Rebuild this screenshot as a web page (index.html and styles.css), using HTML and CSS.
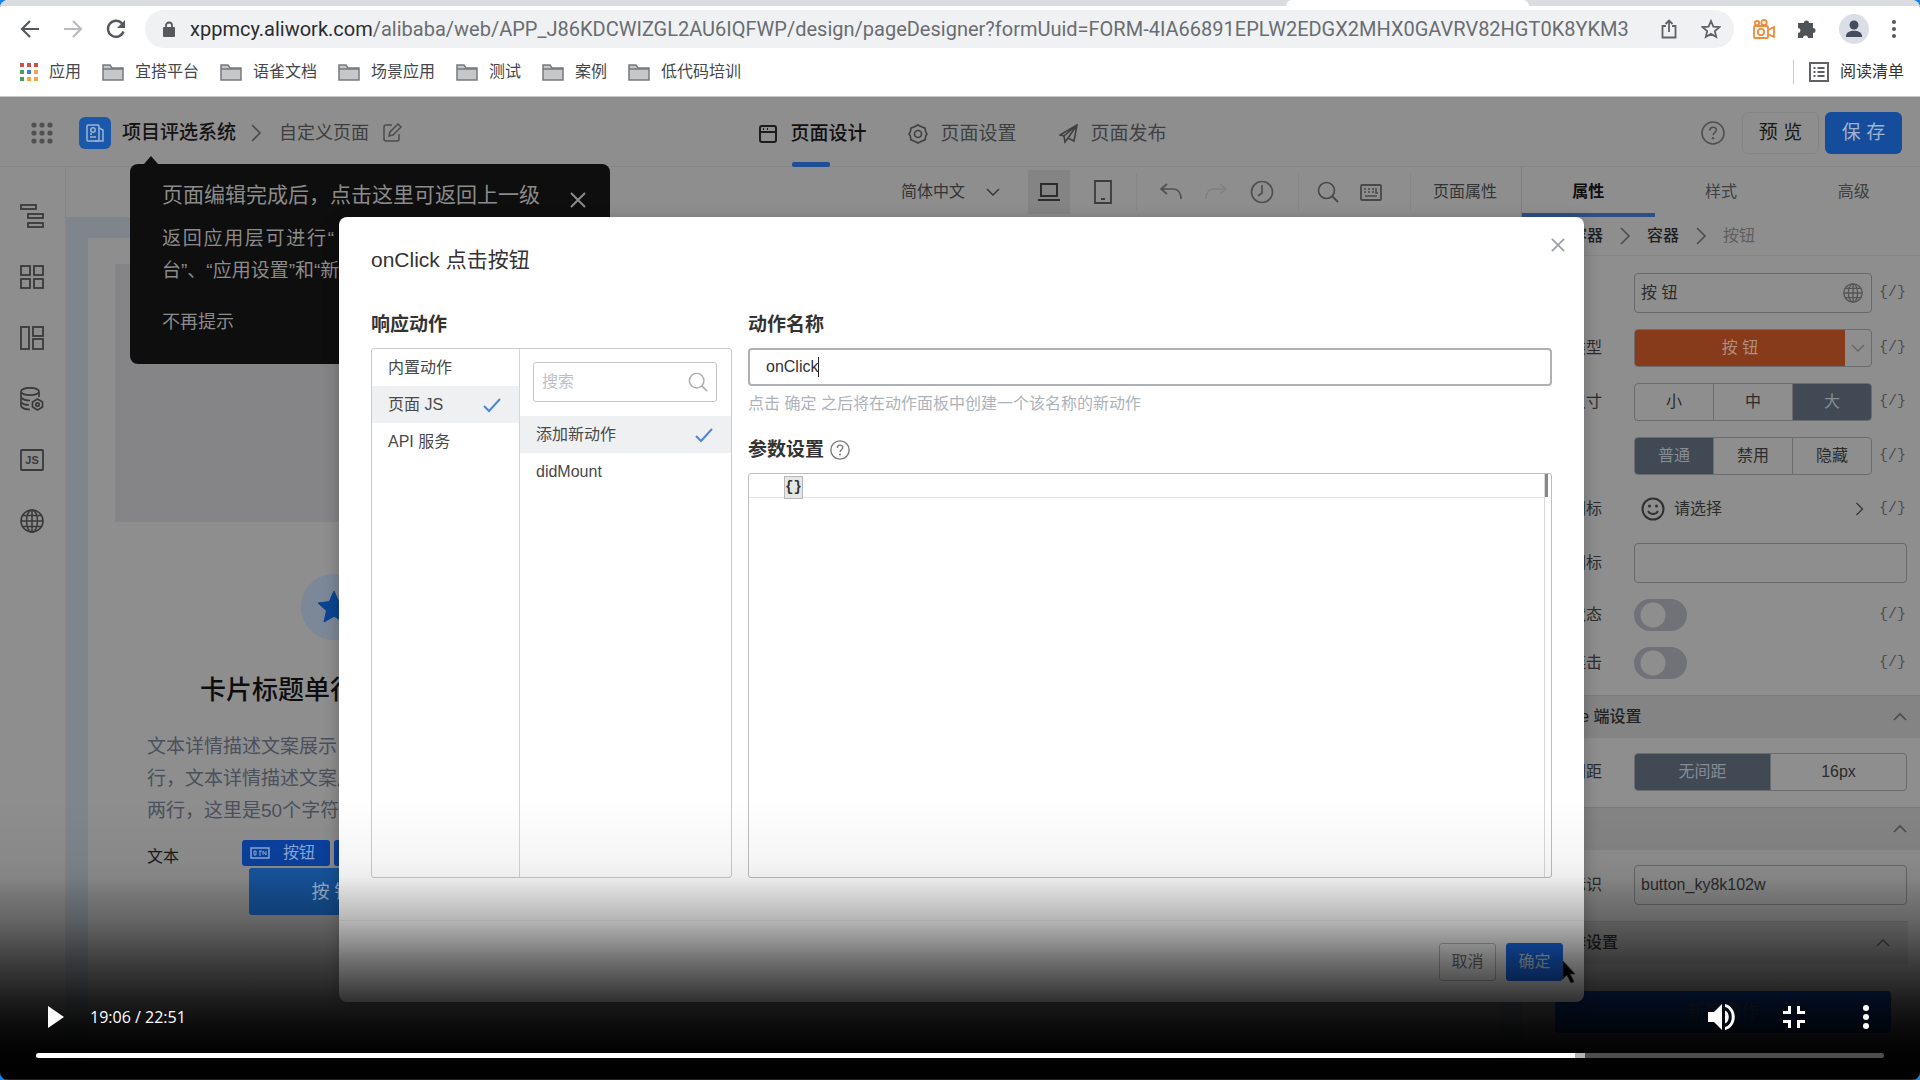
FILE: index.html
```html
<!DOCTYPE html>
<html lang="zh-CN">
<head>
<meta charset="utf-8">
<title>页面设计</title>
<link rel="stylesheet" href="styles.css">
</head>
<body>
<svg class="defs" aria-hidden="true">
  <symbol id="folder" viewBox="0 0 22 18"><path d="M1 16V2h7l2 3h11v12H1z" fill="#c6c7c9" stroke="#77797c" stroke-width="1.5"/><path d="M1 6h20" stroke="#77797c" stroke-width="1.5"/></symbol>
  <symbol id="right" viewBox="0 0 12 18"><path d="M2 1l8 8-8 8" fill="none" stroke="currentColor" stroke-width="1.6"/></symbol>
  <symbol id="up" viewBox="0 0 14 10"><path d="M1 8l6-6 6 6" fill="none" stroke="currentColor" stroke-width="1.6"/></symbol>
  <symbol id="down" viewBox="0 0 14 10"><path d="M1 2l6 6 6-6" fill="none" stroke="currentColor" stroke-width="1.4"/></symbol>
  <symbol id="close" viewBox="0 0 16 16"><path d="M1 1l14 14M15 1L1 15" fill="none" stroke="currentColor" stroke-width="2"/></symbol>
  <symbol id="search" viewBox="0 0 22 22"><circle cx="9.500" cy="9.500" r="8" fill="none" stroke="currentColor" stroke-width="1.6"/><path d="M15 15l6 6" stroke="currentColor" stroke-width="1.8"/></symbol>
  <symbol id="help" viewBox="0 0 24 24"><circle cx="12" cy="12" r="11" fill="none" stroke="currentColor" stroke-width="1.6"/><path d="M8.800 9.500c0-4.400 6.600-4.200 6.600-.4 0 2.400-3.300 2.600-3.300 5.200" fill="none" stroke="currentColor" stroke-width="1.6"/><circle cx="12" cy="17.300" r="1.200" fill="currentColor"/></symbol>
  <symbol id="check" viewBox="0 0 18 16"><path d="M1 9l5 5L17 2" fill="none" stroke="#4a86e0" stroke-width="2"/></symbol>
  <symbol id="globe" viewBox="0 0 24 24"><g fill="none" stroke="currentColor" stroke-width="1.600"><circle cx="12" cy="12" r="11"/><ellipse cx="12" cy="12" rx="5.500" ry="11"/><path d="M12 1v22M1 12h22M3 6.500h18M3 17.500h18"/></g></symbol>
</svg>

<div class="player">
  <header class="browser">
    <div class="tabstrip"><span class="tab"></span></div>
    <div class="navbar">
      <div class="nav-btns">
        <button aria-label="后退"><svg class="i20" viewBox="0 0 20 20"><path d="M19 10H2M10 2l-8 8 8 8" fill="none" stroke="#55585c" stroke-width="2.200"/></svg></button>
        <button aria-label="前进"><svg class="i20" viewBox="0 0 20 20"><path d="M1 10h17M10 2l8 8-8 8" fill="none" stroke="#b9bbbe" stroke-width="2.200"/></svg></button>
        <button aria-label="刷新"><svg class="i20" viewBox="0 0 20 20"><path d="M17.500 12.500A8 8 0 1 1 16 4.500" fill="none" stroke="#55585c" stroke-width="2.400"/><path d="M19 1v8h-8z" fill="#55585c"/></svg></button>
      </div>
      <div class="address">
        <svg class="lock" viewBox="0 0 12 16"><rect y="6" width="12" height="10" rx="1" fill="#55585c"/><path d="M3 7V4.500a3 3 0 0 1 6 0V7" fill="none" stroke="#55585c" stroke-width="1.800"/></svg>
        <span class="url"><b>xppmcy.aliwork.com</b>/alibaba/web/APP_J86KDCWIZGL2AU6IQFWP/design/pageDesigner?formUuid=FORM-4IA66891EPLW2EDGX2MHX0GAVRV82HGT0K8YKM3</span>
        <button aria-label="分享"><svg class="share" viewBox="0 0 16 20"><path d="M5 7H1.500v11.500h13V7H11M8 13V2M4.500 5L8 1.500 11.500 5" fill="none" stroke="#5f6368" stroke-width="1.800"/></svg></button>
        <button aria-label="收藏"><svg class="i20" viewBox="0 0 20 20"><path d="M10 2l2.400 5.600 6 .5-4.600 4 1.400 5.900L10 14.900 4.800 18l1.400-5.900-4.600-4 6-.5z" fill="none" stroke="#5f6368" stroke-width="1.800"/></svg></button>
      </div>
      <div class="extensions">
        <svg class="i22" viewBox="0 0 22 20"><g fill="none" stroke="#f08a3c" stroke-width="1.800"><rect x="1" y="7" width="14" height="12" rx="1"/><circle cx="8" cy="13" r="3.200"/><path d="M15 11l6-3v10l-6-3"/><circle cx="4" cy="4" r="2.200"/><circle cx="11" cy="3.500" r="2.700"/></g></svg>
        <svg class="i20" viewBox="0 0 20 20"><path d="M7 4a2.500 2.500 0 0 1 5 0h4v5a2.500 2.500 0 1 1 0 5v5h-5a2.500 2.500 0 0 0-5 0H1v-5a2.500 2.500 0 0 0 0-5V4z" fill="#505358"/></svg>
        <svg class="avatar" viewBox="0 0 30 30"><circle cx="15" cy="15" r="15" fill="#dcdee6"/><circle cx="15" cy="11" r="4.500" fill="#454c60"/><path d="M7 22c0-7 16-7 16 0v1H7z" fill="#454c60"/></svg>
        <svg class="dots" viewBox="0 0 6 20"><g fill="#55585c"><circle cx="3" cy="3" r="2"/><circle cx="3" cy="10" r="2"/><circle cx="3" cy="17" r="2"/></g></svg>
      </div>
    </div>
    <nav class="bookmarks">
      <a href="#"><svg class="apps" viewBox="0 0 18 18"><g fill="#d0504a"><path d="M0 0h4v4H0zM7 0h4v4H7zM14 0h4v4h-4z"/></g><path d="M0 7h4v4H0zM0 14h4v4H0z" fill="#46a05a"/><path d="M7 7h4v4H7z" fill="#3c7fe0"/><path d="M14 7h4v4h-4zM7 14h4v4H7zM14 14h4v4h-4z" fill="#eda93c"/></svg>应用</a>
      <a href="#"><svg class="folder"><use href="#folder"/></svg>宜搭平台</a>
      <a href="#"><svg class="folder"><use href="#folder"/></svg>语雀文档</a>
      <a href="#"><svg class="folder"><use href="#folder"/></svg>场景应用</a>
      <a href="#"><svg class="folder"><use href="#folder"/></svg>测试</a>
      <a href="#"><svg class="folder"><use href="#folder"/></svg>案例</a>
      <a href="#"><svg class="folder"><use href="#folder"/></svg>低代码培训</a>
      <a href="#" class="reading"><svg class="i20" viewBox="0 0 20 20"><rect x="1" y="1" width="18" height="18" fill="none" stroke="#5f6368" stroke-width="2"/><path d="M4.500 6h2M4.500 10h2M4.500 14h2M8.500 6h7M8.500 10h7M8.500 14h7" stroke="#5f6368" stroke-width="2"/></svg>阅读清单</a>
    </nav>
  </header>

  <div class="app">
    <header class="app-head">
      <div class="crumbs">
        <svg class="grid9" viewBox="0 0 22 22"><g fill="#515151"><circle cx="3" cy="3" r="2.600"/><circle cx="11" cy="3" r="2.600"/><circle cx="19" cy="3" r="2.600"/><circle cx="3" cy="11" r="2.600"/><circle cx="11" cy="11" r="2.600"/><circle cx="19" cy="11" r="2.600"/><circle cx="3" cy="19" r="2.600"/><circle cx="11" cy="19" r="2.600"/><circle cx="19" cy="19" r="2.600"/></g></svg>
        <svg class="logo" viewBox="0 0 32 32"><rect width="32" height="32" rx="6" fill="#1a58ab"/><g fill="none" stroke="#9fb4d0" stroke-width="1.500"><rect x="8" y="8" width="12" height="16" rx="1"/><path d="M20 11l4 2v11h-8M11 20h6M11 17h2"/><circle cx="14" cy="13" r="2.200"/></g></svg>
        <strong>项目评选系统</strong>
        <svg class="chev"><use href="#right"/></svg>
        <span class="page-name">自定义页面</span>
        <svg class="edit" viewBox="0 0 20 20"><path d="M10 2H4a2 2 0 0 0-2 2v12a2 2 0 0 0 2 2h11a2 2 0 0 0 2-2v-5M7 13l1-4 8-8 3 3-8 8z" fill="none" stroke="#4c4c4c" stroke-width="1.500"/></svg>
      </div>
      <nav class="views">
        <a href="#" class="on"><svg class="i20" viewBox="0 0 20 20"><g fill="none" stroke="#1c1c1c" stroke-width="2"><rect x="2" y="2" width="16" height="16" rx="2"/><path d="M2 8h16M5 5h1M9 5h1"/></g></svg>页面设计</a>
        <a href="#"><svg class="i20" viewBox="0 0 20 20"><g fill="none" stroke="#404040" stroke-width="1.600"><path d="M10 1l3.500 1.800 3.600 1.400.6 3.800L19 10l-1.300 2-.6 3.800-3.600 1.400L10 19l-3.500-1.800-3.600-1.400-.6-3.800L1 10l1.300-2 .6-3.800 3.600-1.400z"/><circle cx="10" cy="10" r="3.500"/></g></svg>页面设置</a>
        <a href="#"><svg class="i20" viewBox="0 0 20 20"><path d="M1 11L18 1l-3 16-6-3-3 4-1-6zM5 12L18 1 9 14" fill="none" stroke="#404040" stroke-width="1.600"/></svg>页面发布</a>
      </nav>
      <div class="head-actions">
        <svg class="help"><use href="#help"/></svg>
        <button class="btn-preview">预 览</button>
        <button class="btn-save">保 存</button>
      </div>
    </header>

    <div class="workspace">
      <aside class="rail">
        <svg viewBox="0 0 24 24"><g fill="none" stroke="#3a3a3a" stroke-width="1.800"><rect x="1" y="1" width="15" height="4"/><rect x="8" y="10" width="15" height="4"/><rect x="8" y="19" width="15" height="4"/></g></svg>
        <svg viewBox="0 0 24 24"><g fill="none" stroke="#3a3a3a" stroke-width="1.800"><rect x="1" y="1" width="9" height="9"/><rect x="14" y="1" width="9" height="9"/><rect x="1" y="14" width="9" height="9"/><rect x="14" y="14" width="9" height="9"/></g></svg>
        <svg viewBox="0 0 24 24"><g fill="none" stroke="#3a3a3a" stroke-width="1.800"><rect x="1" y="1" width="8" height="22"/><rect x="13" y="1" width="10" height="9"/><rect x="13" y="13" width="10" height="10"/></g></svg>
        <svg viewBox="0 0 24 24"><g fill="none" stroke="#3a3a3a" stroke-width="1.700"><ellipse cx="10" cy="4.500" rx="9" ry="3.700"/><path d="M1 5v14c1 2 5 3.500 9 3.500M19 5v5M1 10c1 2 5 3.500 9 3.500M1 15c1 2 5 3 8 3"/><path d="M17.500 12l5 3v5l-5 3-5-3v-5z"/><circle cx="17.500" cy="17.500" r="1.700"/></g></svg>
        <svg viewBox="0 0 24 24"><rect x="1" y="2" width="22" height="20" rx="1" fill="none" stroke="#3a3a3a" stroke-width="1.800"/><text x="12" y="16" text-anchor="middle" font-size="11" font-weight="700" fill="#3a3a3a">JS</text></svg>
        <svg class="dark"><use href="#globe"/></svg>
      </aside>

      <main class="stage">
        <div class="tools">
          <button class="lang">简体中文<svg class="v14"><use href="#down"/></svg></button>
          <button class="dev on" aria-label="电脑"><svg class="i22" viewBox="0 0 22 20"><path d="M3 2h16v12H3zM0 18h22" fill="none" stroke="#2c2c2c" stroke-width="2"/></svg></button>
          <button class="dev" aria-label="手机"><svg class="i24" viewBox="0 0 24 24"><path d="M4 1h16v22H4zM10 19h4" fill="none" stroke="#3c3c3c" stroke-width="1.800"/></svg></button>
          <span class="bar"></span>
          <button class="tool" aria-label="撤销"><svg class="i22" viewBox="0 0 22 18"><path d="M7 1L1 6l6 5M1 6h12c5 0 8 4 8 10" fill="none" stroke="#505050" stroke-width="1.700"/></svg></button>
          <button class="tool" aria-label="重做"><svg class="i22" viewBox="0 0 22 18"><path d="M15 1l6 5-6 5M21 6H9c-5 0-8 4-8 10" fill="none" stroke="#808080" stroke-width="1.500"/></svg></button>
          <button class="tool" aria-label="历史"><svg class="i24" viewBox="0 0 24 24"><circle cx="12" cy="12" r="10.500" fill="none" stroke="#505050" stroke-width="1.700"/><path d="M12 5v8l-4 3" fill="none" stroke="#505050" stroke-width="1.700"/></svg></button>
          <span class="bar"></span>
          <button class="tool near" aria-label="搜索"><svg class="i22"><use href="#search"/></svg></button>
          <button class="tool near" aria-label="快捷键"><svg class="i22" viewBox="0 0 22 18"><rect x="1" y="2" width="20" height="15" rx="1" fill="none" stroke="#484848" stroke-width="1.800"/><path d="M4 6h2M8 6h2M12 6h2M4 9h2M8 9h2M12 9h2M16 5v5h2M5 13h12" stroke="#484848" stroke-width="1.500" fill="none"/></svg></button>
          <span class="bar"></span>
          <button class="page-attr">页面属性</button>
        </div>
        <div class="canvas">
          <div class="sheet">
            <div class="hero"></div>
            <section class="card">
              <svg class="star" viewBox="0 0 66 66"><circle cx="33" cy="33" r="33" fill="#7c8797"/><path d="M33 17l4.700 10.600L49 29l-8.500 7.800L43 48l-10-5.700L23 48l2.500-11.200L17 29l11.300-1.400z" fill="#0b4491" stroke="#0b4491" stroke-linejoin="round"/></svg>
              <h2>卡片标题单行展示标题</h2>
              <p>文本详情描述文案展示，展示两<br>行，文本详情描述文案展示展示<br>两行，这里是50个字符展示文案</p>
              <div class="field">
                <span class="field-name">文本</span>
                <div class="picked">
                  <div class="tags"><span class="tag"><svg class="btn-ico" viewBox="0 0 20 12"><rect x="1" y="1" width="18" height="10" fill="none" stroke="#8ba9dc" stroke-width="1.500"/><path d="M4 4v4h2V4zM9 4h3M10 4v5M13 8V4l3 4V4" stroke="#8ba9dc" fill="none"/></svg>按钮</span><span class="tag wide"></span></div>
                  <button class="big">按 钮</button>
                </div>
              </div>
            </section>
          </div>
        </div>
      </main>

      <aside class="panel">
        <nav class="ptabs"><a href="#" class="on">属性</a><a href="#">样式</a><a href="#">高级</a></nav>
        <div class="path"><b>子容器</b><svg class="chev"><use href="#right"/></svg><b>容器</b><svg class="chev"><use href="#right"/></svg><span>按钮</span></div>
        <div class="rows">
          <div class="row tall"><label for="f-title">标题</label><div class="ctl box"><input id="f-title" value="按 钮"><svg class="i20"><use href="#globe"/></svg></div><span class="code">{/}</span></div>
          <div class="row"><span class="lbl">按钮类型</span><button class="ctl type"><span>按 钮</span><svg class="v14"><use href="#down"/></svg></button><span class="code">{/}</span></div>
          <div class="row"><span class="lbl">按钮尺寸</span><div class="ctl seg"><button>小</button><button>中</button><button class="on">大</button></div><span class="code">{/}</span></div>
          <div class="row"><span class="lbl">状态</span><div class="ctl seg"><button class="on">普通</button><button>禁用</button><button>隐藏</button></div><span class="code">{/}</span></div>
          <div class="row low"><span class="lbl">按钮图标</span><button class="ctl pick"><svg class="i24" viewBox="0 0 24 24"><circle cx="12" cy="12" r="10.500" fill="none" stroke="#303030" stroke-width="2"/><circle cx="8.500" cy="9" r="1.500" fill="#303030"/><circle cx="15.500" cy="9" r="1.500" fill="#303030"/><path d="M7 14c2 4 8 4 10 0" fill="none" stroke="#303030" stroke-width="1.800"/></svg>请选择<svg class="go"><use href="#right"/></svg></button><span class="code">{/}</span></div>
          <div class="row tall"><label for="f-icon">自选图标</label><div class="ctl box"><input id="f-icon"></div></div>
          <div class="row short"><label for="f-load">加载状态</label><input class="switch" type="checkbox" id="f-load"><span class="code">{/}</span></div>
          <div class="row short"><label for="f-dbl">防止连击</label><input class="switch" type="checkbox" id="f-dbl"><span class="code">{/}</span></div>
        </div>
        <h3>Mobile 端设置<svg class="v14"><use href="#up"/></svg></h3>
        <div class="rows one"><div class="row"><span class="lbl">组件间距</span><div class="ctl seg"><button class="on">无间距</button><button>16px</button></div></div></div>
        <h3>高级<svg class="v14"><use href="#up"/></svg></h3>
        <div class="rows one"><div class="row tall"><label for="f-id">唯一标识</label><div class="ctl box"><input id="f-id" value="button_ky8k102w"></div></div></div>
        <h3 class="inset">动作设置<svg class="v14"><use href="#up"/></svg></h3>
        <button class="new-action">新建动作</button>
      </aside>
    </div>

    <div class="tip">
      <button class="tip-close" aria-label="关闭提示"><svg class="i16"><use href="#close"/></svg></button>
      <h4>页面编辑完成后，点击这里可返回上一级</h4>
      <p><span class="full">返回应用层可进行“</span><span>台”、“应用设置”和“新</span></p>
      <a href="#">不再提示</a>
    </div>

    <div class="overlay">
      <div class="modal" role="dialog" aria-labelledby="m-title">
        <header><h1 id="m-title">onClick 点击按钮</h1><button class="m-close" aria-label="关闭"><svg><use href="#close"/></svg></button></header>
        <div class="m-body">
          <section class="m-left">
            <h5>响应动作</h5>
            <div class="lists">
              <ul class="kinds"><li>内置动作</li><li class="on">页面 JS<svg class="chk"><use href="#check"/></svg></li><li>API 服务</li></ul>
              <div class="acts">
                <div class="m-search"><input aria-label="搜索" placeholder="搜索"><svg class="i20"><use href="#search"/></svg></div>
                <ul><li class="on">添加新动作<svg class="chk"><use href="#check"/></svg></li><li>didMount</li></ul>
              </div>
            </div>
          </section>
          <section class="m-right">
            <h5><label for="m-name">动作名称</label></h5>
            <div class="m-input"><input id="m-name" value="onClick"><i class="caret"></i></div>
            <p class="hint">点击 确定 之后将在动作面板中创建一个该名称的新动作</p>
            <h5 class="param">参数设置<svg class="i20"><use href="#help"/></svg></h5>
            <div class="editor"><div class="code-area"><div class="line"><span>{}</span></div></div><div class="ruler"><i></i></div></div>
          </section>
        </div>
        <footer><button>取消</button><button class="ok">确定</button></footer>
      </div>
    </div>
    <svg class="cursor" viewBox="0 0 14 24"><path d="M1 1v18l4-4 4 8 3-1.500-4-7.500h5z" fill="#000" stroke="#555" stroke-width=".8"/></svg>
  </div>

  <div class="controls">
    <div class="c-row">
      <button class="play" aria-label="播放"><svg viewBox="0 0 16 22"><path d="M0 0l16 11L0 22z" fill="#fff"/></svg></button>
      <span class="time">19:06 / 22:51</span>
      <button aria-label="音量"><svg class="vol" viewBox="0 0 28 28"><path d="M0 9v10h6l8 8V1L6 9zM17 7.500v13c5-2 5-11 0-13zM17 1v3c9 2 9 18 0 20v3c13-3 13-23 0-26z" fill="#fff"/></svg></button>
      <button aria-label="退出全屏"><svg class="i22" viewBox="0 0 22 22"><path d="M0 6.500h6.500V0M15.500 0v6.500H22M0 15.500h6.500V22M15.500 22v-6.500H22" fill="none" stroke="#fff" stroke-width="3"/></svg></button>
      <button aria-label="更多"><svg class="more" viewBox="0 0 6 24"><g fill="#fff"><circle cx="3" cy="3" r="3"/><circle cx="3" cy="12" r="3"/><circle cx="3" cy="21" r="3"/></g></svg></button>
    </div>
    <input class="seek" type="range" aria-label="进度" min="0" max="1371" value="1146" style="--played:83.3%;--loaded:83.8%">
  </div>
</div>
</body>
</html>
```
FILE: styles.css
```css
* { box-sizing: border-box; }
body {
  margin: 0;
  background: #0a84ff;
  font-family: "Liberation Sans", "Noto Sans CJK SC", sans-serif;
  font-size: 16px;
  line-height: 24px;
  color: #222;
}
button, input { font: inherit; color: inherit; margin: 0; padding: 0; border: 0; background: none; }
button { display: flex; align-items: center; justify-content: center; white-space: nowrap; }
input { min-width: 0; outline: 0; }
a { color: inherit; text-decoration: none; }
h1, h2, h3, h4, h5, p, ul { margin: 0; padding: 0; list-style: none; }
svg { display: block; flex: none; }
.defs { position: absolute; width: 0; height: 0; }
.i16 { width: 16px; height: 16px; }
.i20 { width: 20px; height: 20px; }
.i22 { width: 22px; height: 22px; }
.i24 { width: 24px; height: 24px; }
.v14 { width: 14px; height: 10px; }
.chev { width: 12px; height: 18px; color: #4c4c4c; }

.player {
  position: relative;
  display: flex;
  flex-direction: column;
  height: 100vh;
  overflow: hidden;
  border-radius: 8px;
  background: #000;
}

/* browser chrome */
.browser { background: #fff; border-bottom: 1px solid #c8c8c8; flex: none; }
.tabstrip { height: 6px; background: #dadce0; display: flex; }
.tab { width: 243px; margin-left: 67%; background: #fff; border-radius: 6px 6px 0 0; }
.navbar { display: flex; align-items: center; height: 46px; padding: 0 20px; gap: 19px; }
.nav-btns { display: flex; gap: 23px; }
.address {
  flex: 1;
  min-width: 0;
  display: flex;
  align-items: center;
  height: 38px;
  padding: 0 13px 0 18px;
  border-radius: 19px;
  background: #eff1f3;
}
.lock { width: 12px; height: 18px; }
.url { flex: 1; min-width: 0; overflow: hidden; white-space: nowrap; margin-left: 15px; font-family: Roboto, sans-serif; font-size: 20px; color: #6a6d71; }
.url b { font-weight: 400; color: #2b2d30; }
.share { width: 16px; height: 22px; }
.address button + button { margin-left: 24px; }
.extensions { display: flex; align-items: center; gap: 22px; padding-right: 3px; }
.avatar { width: 30px; height: 30px; }
.dots { width: 6px; height: 20px; }
.bookmarks { display: flex; align-items: center; height: 44px; padding: 0 16px 4px 20px; gap: 21px; color: #45474a; }
.bookmarks a { display: flex; align-items: center; gap: 11px; white-space: nowrap; }
.apps { width: 18px; height: 20px; }
.folder { width: 22px; height: 18px; }
.bookmarks a.reading { margin-left: auto; padding-left: 15px; border-left: 1px solid #ccc; color: #333; }

/* designer, seen through the modal mask */
.app { position: relative; flex: 1; min-height: 0; display: flex; flex-direction: column; background: #8e8e8e; }
.app-head { display: grid; grid-template-columns: 1fr auto 1fr; align-items: center; height: 70px; flex: none; border-bottom: 1px solid #868686; font-size: 19px; }
.crumbs { display: flex; align-items: center; padding: 2px 0 0 31px; white-space: nowrap; }
.grid9 { width: 22px; height: 22px; }
.logo { width: 32px; height: 32px; margin: 0 11px 0 26px; }
.crumbs strong { font-weight: 500; color: #141414; }
.crumbs .chev { margin: 0 17px 0 14px; }
.page-name { font-size: 18px; color: #3d3d3d; }
.edit { width: 20px; height: 20px; margin-left: 13px; }
.views { display: flex; gap: 42px; height: 70px; padding-left: 5px; color: #404040; }
.views a { position: relative; display: flex; align-items: center; gap: 12px; padding-top: 4px; }
.views a.on { font-weight: 500; color: #111; }
.views a.on::after { content: ""; position: absolute; left: 34px; bottom: 0; width: 38px; height: 5px; border-radius: 2px; background: #1f4d97; }
.head-actions { display: flex; align-items: center; justify-content: flex-end; padding: 2px 18px 0 0; }
.help { width: 24px; height: 24px; margin-right: 17px; color: #505050; }
.head-actions button { width: 77px; height: 42px; border-radius: 6px; }
.btn-preview { border: 1px solid #858585; margin-right: 6px; color: #1a1a1a; }
.head-actions .btn-save { background: #154c9b; color: #9fb3cf; }

.workspace { flex: 1; min-height: 0; display: flex; }
.rail { width: 66px; flex: none; display: flex; flex-direction: column; align-items: center; gap: 37px; padding: 37px 2px 0 0; border-right: 1px solid #868686; }
.rail svg { width: 24px; height: 24px; }
.rail .dark { color: #3a3a3a; }
.stage { flex: 1; min-width: 0; display: flex; flex-direction: column; }
.tools { display: flex; align-items: center; justify-content: flex-end; height: 50px; flex: none; color: #484848; }
.lang { gap: 21px; margin-right: 28px; color: #343434; }
.dev { width: 42px; height: 44px; }
.dev.on { background: #848484; margin-right: 12px; }
.bar { width: 1px; height: 36px; background: #868686; margin: 0 18px; }
.dev + .bar { margin: 0 23px 0 12px; }
.tool + .tool { margin-left: 23px; }
.tool + .tool.near { margin-left: 21px; }
.tool + .bar { margin-left: 24px; }
.tool.near + .bar { margin: 0 22px 0 28px; }
.page-attr { margin-right: 24px; color: #343434; }
.canvas { flex: 1; min-height: 0; overflow: hidden; background: #7f858a; padding: 21px 22px 0; }
.sheet { height: 100%; background: #8e8e8e; padding: 26px 27px 0; }
.hero { height: 258px; background: #858587; }
.card { width: 440px; padding: 52px 0 0 32px; }
.star { width: 66px; height: 66px; margin: 0 auto 0 154px; }
.card h2 { margin: 30px 0 0 53px; font-size: 26px; line-height: 40px; font-weight: 500; color: #0d0d0d; white-space: nowrap; }
.card p { margin-top: 21px; font-size: 19px; line-height: 32px; color: #4b505b; white-space: nowrap; }
.field { display: flex; margin-top: 13px; color: #1a1a1a; }
.field-name { width: 95px; padding-top: 5px; }
.picked { flex: 1; }
.tags { display: flex; gap: 4px; }
.tag { display: flex; align-items: center; gap: 13px; width: 88px; height: 26px; padding-left: 8px; border-radius: 3px; background: #0a419f; color: #8ba9dc; white-space: nowrap; }
.tag.wide { width: 60px; }
.btn-ico { width: 20px; height: 14px; }
.big { width: 166px; height: 47px; margin: 2px 0 0 7px; border-radius: 3px; background: #17559f; color: #a6bcd8; font-size: 18px; }

/* property panel */
.panel { width: 399px; flex: none; border-left: 1px solid #7c7c7c; overflow: hidden; color: #2c2c2c; }
.ptabs { display: flex; height: 50px; color: #404040; }
.ptabs a { flex: 1; display: flex; align-items: center; justify-content: center; }
.ptabs a.on { font-weight: 700; color: #0f0f0f; box-shadow: inset 0 -4px #2b4f86; }
.path { display: flex; align-items: center; gap: 16px; height: 39px; padding-left: 33px; border-bottom: 1px solid #848484; color: #5e5e5e; }
.path b { font-weight: 500; color: #1f1f1f; }
.rows { display: flex; flex-direction: column; gap: 16px; padding: 17px 13px 16px 16px; }
.rows.one { padding: 15px 13px 16px 16px; }
.row { display: flex; align-items: center; height: 38px; }
.row.tall { height: 40px; }
.row.low { height: 36px; }
.row.short { height: 32px; }
.row label, .row .lbl { width: 96px; flex: none; }
.ctl { flex: 1; min-width: 0; height: 100%; }
.code { width: 28px; flex: none; margin-left: 7px; color: #4c4c52; font-family: "Liberation Mono", monospace; font-size: 15px; white-space: nowrap; }
.box { display: flex; align-items: center; border: 1px solid #68686a; border-radius: 4px; padding: 0 8px 0 6px; }
.box input { flex: 1; }
.box svg { color: #555; }
.type { border: 1px solid #6c6c6c; border-radius: 4px; color: #666; }
.type span { flex: 1; height: 36px; line-height: 36px; background: #873b1b; color: #b08f80; border-radius: 3px 0 0 3px; }
.type svg { margin: 0 6px; }
.seg { display: flex; border: 1px solid #6c6c6e; border-radius: 4px; overflow: hidden; }
.seg button { flex: 1; }
.seg button + button { border-left: 1px solid #6c6c6e; }
.seg button.on { background: #414954; color: #858c96; }
.pick { justify-content: flex-start; gap: 9px; padding: 0 8px 0 7px; }
.go { width: 9px; height: 14px; margin-left: auto; color: #333; }
.switch { appearance: none; width: 53px; height: 32px; border-radius: 16px; background: radial-gradient(circle at 19px 16px, #8e8e8e 12px, #717277 13px); }
.switch + .code { margin-left: auto; }
.panel h3 { display: flex; align-items: center; justify-content: space-between; height: 43px; padding: 0 13px 0 20px; background: #848485; border-top: 1px solid #7c7c7c; font-size: 16px; font-weight: 500; color: #222; }
.panel h3 svg { color: #4c4c4c; }
.panel h3.inset { margin-right: 12px; padding: 0 18px 0 32px; }
.new-action { width: 336px; height: 42px; margin: 27px 0 0 33px; border-radius: 4px; background: #0c3d96; color: #3f4f6c; font-size: 18px; }

/* return hint */
.tip { position: absolute; left: 130px; top: 67px; width: 480px; height: 200px; padding: 17px 32px; border-radius: 8px; background: #0e0e0f; color: #8b8b8b; font-size: 18px; line-height: 32px; white-space: nowrap; }
.tip::before { content: ""; position: absolute; left: 14px; top: -8px; border: 7px solid transparent; border-top: 0; border-bottom: 8px solid #0e0e0f; }
.tip h4 { font-size: 21px; line-height: 28px; font-weight: 400; margin-bottom: 14px; }
.tip p { font-size: 19px; }
.tip p span { display: block; }
.tip p .full { width: 172px; text-align-last: justify; white-space: normal; }
.tip a { display: inline-block; margin-top: 19px; }
.tip-close { position: absolute; right: 24px; top: 28px; }

/* dialog */
.overlay { position: absolute; inset: 0; padding: 120px 336px 78px 339px; display: flex; }
.modal { flex: 1; min-width: 0; display: flex; flex-direction: column; background: #fff; border-radius: 8px; box-shadow: 0 4px 16px rgba(0, 0, 0, .25); color: #4a4a4a; }
.modal header { display: flex; justify-content: space-between; padding: 20px 19px 0 32px; }
.modal h1 { font-size: 21px; line-height: 46px; font-weight: 400; color: #333; }
.m-close { align-self: flex-start; color: #9ba0a8; }
.m-close svg { width: 14px; height: 14px; }
.modal .m-close { width: 14px; height: 16px; }
.m-body { flex: 1; min-height: 0; display: flex; gap: 16px; padding: 26px 32px 42px; }
.m-left { width: 361px; flex: none; display: flex; flex-direction: column; }
.m-right { flex: 1; min-width: 0; display: flex; flex-direction: column; }
.modal h5 { font-size: 19px; line-height: 32px; font-weight: 700; color: #333; margin-bottom: 7px; }
.lists { flex: 1; display: flex; border: 1px solid #c9cbce; border-radius: 3px; }
.kinds { width: 148px; flex: none; border-right: 1px solid #d4d6d8; }
.modal li { display: flex; align-items: center; justify-content: space-between; height: 37px; padding: 0 18px 0 16px; white-space: nowrap; }
.modal li.on { background: #eef0f2; }
.chk { width: 18px; height: 16px; }
.acts { flex: 1; min-width: 0; }
.m-search { display: flex; align-items: center; height: 40px; margin: 13px 14px 14px 13px; padding: 0 8px; border: 1px solid #c3c5c8; border-radius: 3px; color: #aaadb2; }
.m-search input { flex: 1; }
.m-search input::placeholder { color: #bcbfc8; }
.m-input { display: flex; align-items: center; height: 38px; flex: none; padding: 0 16px; border: 2px solid #aeb0b3; border-radius: 4px; color: #333; }
.m-input input { field-sizing: content; }
.caret { width: 1px; height: 20px; background: #222; }
.hint { margin: 6px 0 18px; color: #adb2bb; }
.modal h5.param { display: flex; align-items: center; gap: 6px; }
.param svg { color: #777; }
.editor { flex: 1; display: flex; border: 1px solid #bcbec1; border-radius: 3px; }
.code-area { flex: 1; }
.line { height: 24px; padding-left: 35px; border-bottom: 1px solid #e4e4e4; }
.line span { display: inline-block; border: 1px solid #b9b9b9; background: #e3e8e2; font-family: "Liberation Mono", monospace; font-size: 14px; line-height: 21px; font-weight: 700; color: #333; }
.ruler { width: 7px; border-left: 1px solid #d8d8d8; }
.ruler i { display: block; width: 3px; height: 23px; background: #888; }
.modal footer { display: flex; justify-content: flex-end; gap: 10px; height: 82px; padding: 22px 21px 0; border-top: 1px solid #f0f0f0; }
.modal footer button { width: 57px; height: 38px; border: 1px solid #c0c2c5; border-radius: 3px; color: #777; }
.modal footer .ok { background: #1a70f5; border-color: #1a70f5; color: #d8e6fc; }
.cursor { position: absolute; right: 344px; bottom: 96px; width: 14px; height: 24px; }

/* video controls */
.controls {
  position: absolute;
  inset: auto 0 0;
  height: 280px;
  padding: 0 36px 21px;
  display: flex;
  flex-direction: column;
  justify-content: flex-end;
  gap: 22px;
  border-bottom: 1px solid #222;
  background: linear-gradient(rgba(0,0,0,0) 0, rgba(0,0,0,.04) 60px, rgba(0,0,0,.07) 77px, rgba(0,0,0,.16) 93px, rgba(0,0,0,.29) 120px, rgba(0,0,0,.44) 143px, rgba(0,0,0,.56) 160px, rgba(0,0,0,.66) 177px, rgba(0,0,0,.8) 200px, rgba(0,0,0,.92) 227px, rgba(0,0,0,.98) 250px, #000 280px);
}
.c-row { display: flex; align-items: center; height: 28px; padding: 0 15px 0 12px; color: #fff; }
.play svg { width: 16px; height: 22px; }
.time { margin: 0 auto 0 26px; font-family: "Open Sans", "Noto Sans", sans-serif; font-size: 16px; }
.vol { width: 28px; height: 28px; margin-right: 47px; }
.more { width: 6px; height: 24px; margin-left: 58px; }
.seek {
  appearance: none;
  width: 100%;
  height: 5px;
  border-radius: 3px;
  background: linear-gradient(90deg, #fff var(--played), #b4b4b4 var(--played) var(--loaded), #4d4d4d var(--loaded));
}
.seek::-webkit-slider-thumb { appearance: none; width: 1px; height: 1px; }
```
